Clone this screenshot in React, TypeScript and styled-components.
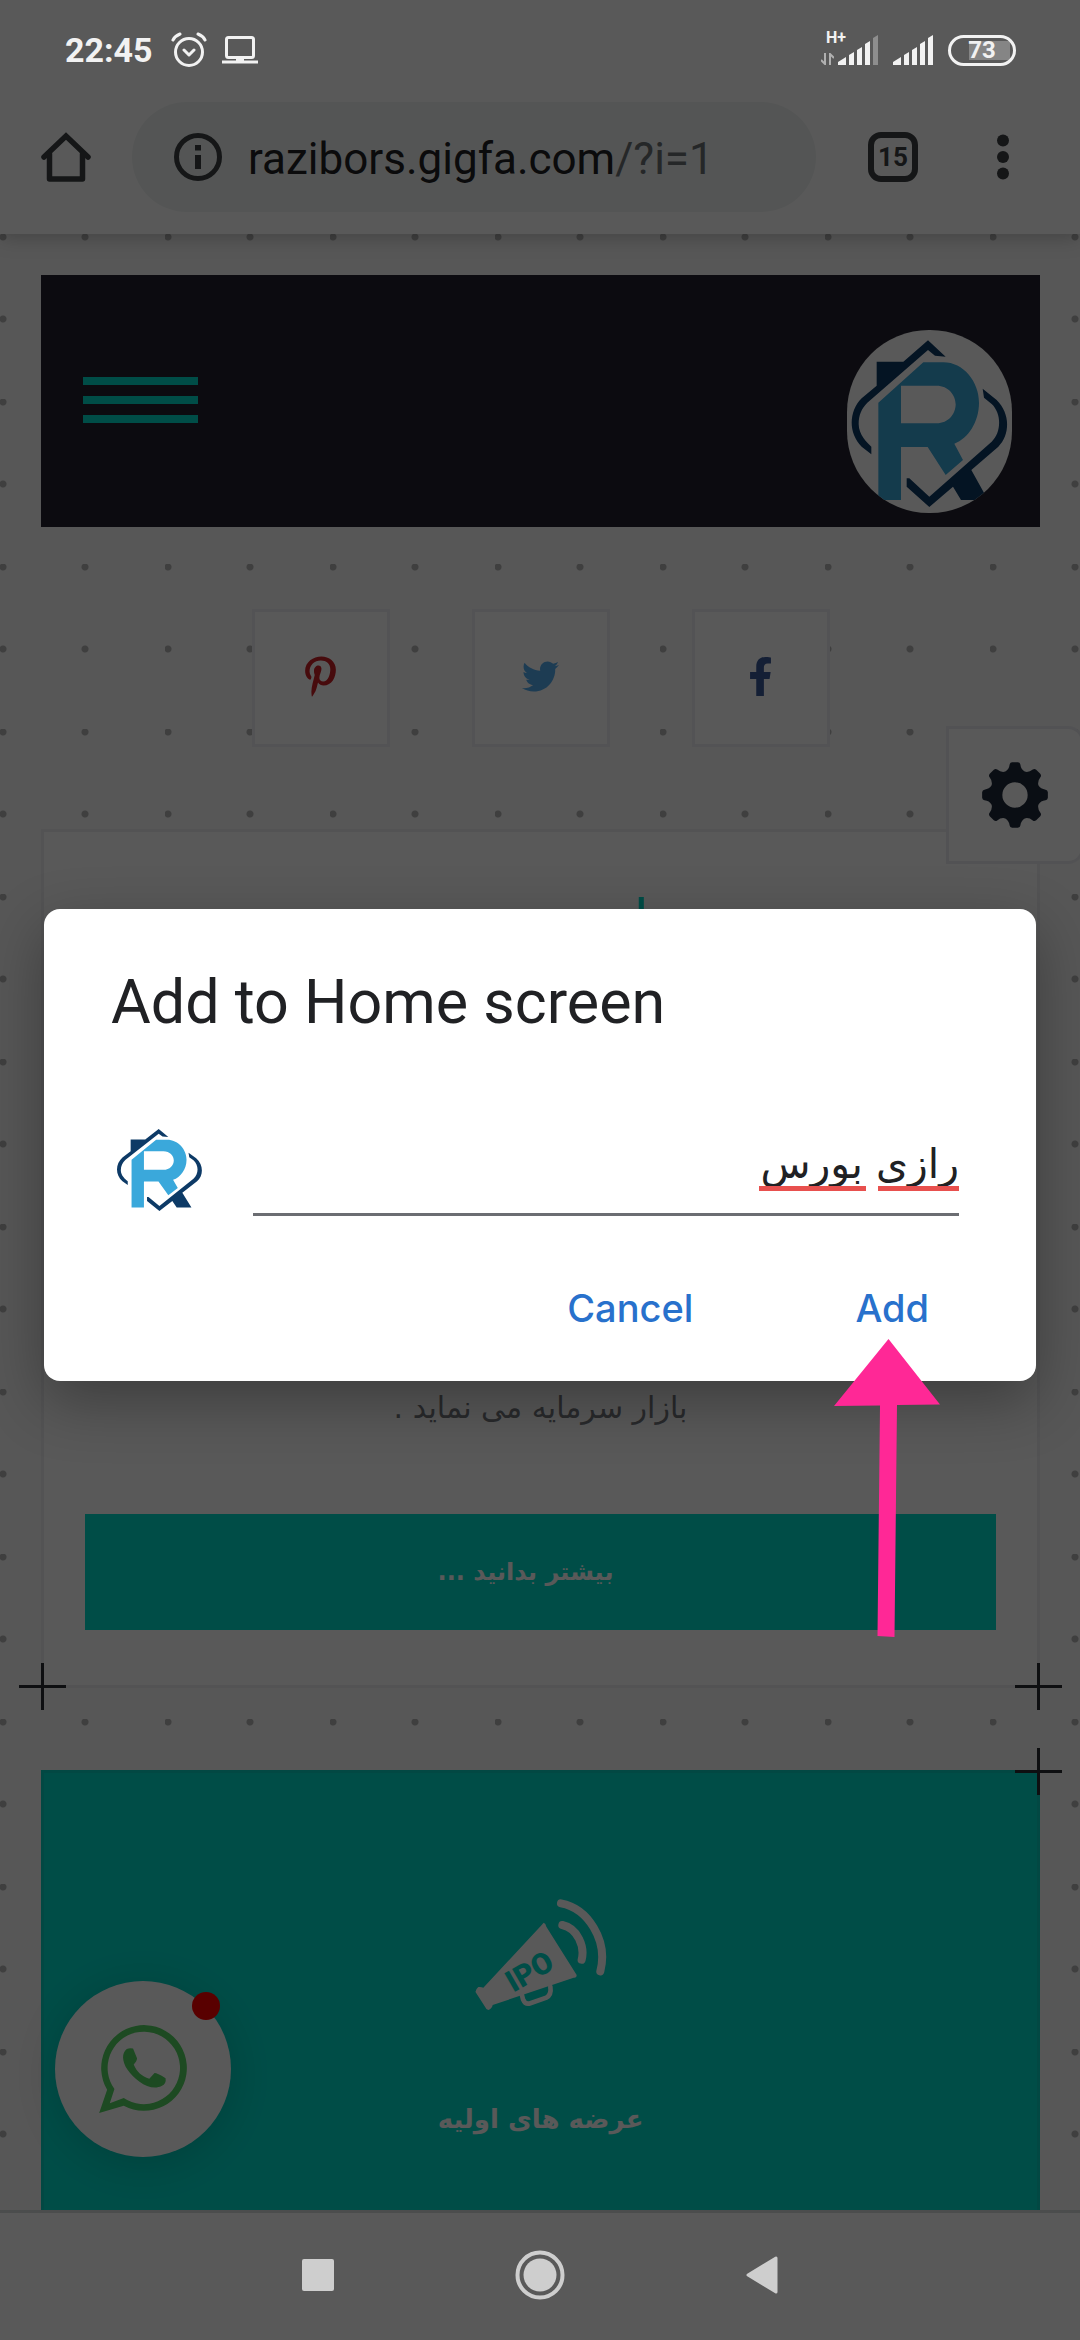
import React, { useState } from "react";
import styled, { createGlobalStyle } from "styled-components";
import { FaFacebookF, FaPinterestP, FaTwitter } from "react-icons/fa";

const teal = "#00dccb";
const ink = "#3c4043";
const persian = `"DejaVu Sans", sans-serif`;

const GlobalStyle = createGlobalStyle`
  *, *::before, *::after { box-sizing: border-box; }
  body { margin: 0; background: #595959; font-family: Roboto, sans-serif; }
  button { border: 0; padding: 0; background: none; font: inherit; color: inherit; cursor: pointer; }
  svg { display: block; }
`;

const Screen = styled.div`
  position: relative;
  display: flex;
  flex-direction: column;
  min-height: 100vh;
  overflow: hidden;
`;

/* ---------- system bars ---------- */

const StatusBar = styled.header`
  position: relative;
  z-index: 3;
  display: flex;
  align-items: center;
  justify-content: space-between;
  height: 100px;
  padding: 0 64px 0 65px;
  background: #595959;
  color: #f2f2f2;
`;

const StatusGroup = styled.div`
  display: flex;
  align-items: center;
  gap: 15px;
`;

const Clock = styled.time`
  padding-right: 3px;
  font-size: 34px;
  line-height: 40px;
  font-weight: 700;
`;

const Signal = styled.div`
  position: relative;
`;

const NetworkType = styled.span`
  position: absolute;
  right: 32px;
  top: -5px;
  font-size: 16px;
  line-height: 16px;
  font-weight: 700;
`;

const DataArrows = styled.svg`
  position: absolute;
  right: 44px;
  bottom: 0;
`;

const Battery = styled.div`
  display: flex;
  align-items: center;
  justify-content: center;
  width: 68px;
  height: 31px;
  border: 3px solid #f2f2f2;
  border-radius: 16px;
  padding: 3px;
  font-size: 24px;
  line-height: 24px;
  font-weight: 700;
  background: linear-gradient(#858585, #858585) right 3px center / 41px 19px no-repeat;
`;

const NavBar = styled.nav`
  position: relative;
  z-index: 3;
  display: flex;
  align-items: center;
  justify-content: center;
  gap: 172px;
  height: 130px;
  padding-bottom: 4px;
  border-top: 3px solid #4b4d4d;
  background: #595959;
  color: #cecece;
`;

const NavButton = styled.button`
  display: grid;
  place-items: center;
  width: 50px;
  height: 50px;
`;

/* ---------- browser ---------- */

const Toolbar = styled.div`
  position: relative;
  z-index: 1;
  display: flex;
  align-items: center;
  gap: 41px;
  padding: 2px 52px 22px 41px;
  background: #fff;
  color: ${ink};
  box-shadow: 0 2px 20px rgba(0, 0, 0, 0.25);
`;

const ToolButton = styled.button`
  display: grid;
  place-items: center;
  width: 50px;
  height: 50px;
`;

const ToolActions = styled.div`
  display: flex;
  gap: 60px;
  padding-left: 11px;
`;

const TabCount = styled(ToolButton)`
  border: 6px solid ${ink};
  border-radius: 13px;
  font-size: 26px;
  line-height: 32px;
  font-weight: 700;
`;

const AddressBar = styled.button`
  flex: 1;
  display: flex;
  align-items: center;
  gap: 26px;
  height: 110px;
  padding-left: 42px;
  border-radius: 55px;
  background: #f0f4f3;
  text-align: left;
`;

const Address = styled.span`
  padding-top: 4px;
  font-size: 44px;
  line-height: 56px;
  color: #202124;
`;

const AddressPath = styled.span`
  color: #6b6f73;
`;

/* ---------- site ---------- */

const dot = (x: number, y: number) =>
  `radial-gradient(circle at ${x}px ${y}px, #b4b4b4 3px, transparent 4px)`;

const Site = styled.main`
  position: relative;
  flex: 1;
  display: flex;
  flex-direction: column;
  gap: 82px;
  padding: 41px 40px 0 41px;
  background-color: #f8f8f8;
  background-image: ${dot(3, 3)}, ${dot(85, 3)}, ${dot(3, 85)}, ${dot(85, 85)};
  background-size: 165px 165px;
  font-family: ${persian};
`;

const SiteHeader = styled.div`
  display: flex;
  align-items: center;
  justify-content: space-between;
  height: 252px;
  padding: 40px 28px 0 42px;
  background: #23222e;
`;

const MenuButton = styled.button`
  display: flex;
  flex-direction: column;
  gap: 11px;
  width: 115px;
  margin-bottom: 42px;
`;

const MenuLine = styled.span`
  height: 8px;
  background: ${teal};
`;

const LogoDisc = styled.a`
  width: 165px;
  height: 183px;
  overflow: hidden;
  border-radius: 82px;
  background: #fff;
`;

const SocialRow = styled.div`
  display: flex;
  justify-content: center;
  gap: 82px;
`;

const SocialLink = styled.a<{ $color: string; $size: number }>`
  display: grid;
  place-items: center;
  width: 138px;
  height: 138px;
  padding-bottom: 4px;
  border: 3px solid #eeeef3;
  background: #fff;
  color: ${(p) => p.$color};
  font-size: ${(p) => p.$size}px;
`;

const SettingsButton = styled.button`
  position: absolute;
  top: 492px;
  right: -4px;
  z-index: 1;
  display: grid;
  place-items: center;
  width: 138px;
  height: 138px;
  border: 3px solid #ececef;
  border-radius: 0 16px 16px 0;
  background: #fff;
  color: #1e293b;
`;

const Card = styled.section`
  position: relative;
  display: flex;
  flex-direction: column;
  min-height: 859px;
  padding: 55px 41px;
  border: 3px solid #eeeeef;
  background: #fff;
  text-align: center;
`;

const CardTitle = styled.h1`
  margin: 0 0 auto;
  font-size: 56px;
  line-height: 68px;
  font-weight: 400;
  color: ${teal};
`;

const CardText = styled.p`
  margin: 0 0 82px;
  font-size: 30px;
  line-height: 48px;
  color: #75787e;
`;

const MoreButton = styled.button`
  height: 116px;
  padding-right: 30px;
  background: ${teal};
  font-size: 24px;
  line-height: 40px;
  font-weight: 700;
  color: #fff;
`;

const Plus = styled.span<{ $side: "left" | "right"; $edge: "top" | "bottom" }>`
  position: absolute;
  ${(p) => p.$side}: -25px;
  ${(p) => p.$edge}: -25px;
  width: 47px;
  height: 47px;
  background:
    linear-gradient(#2a2b33, #2a2b33) center / 3px 47px no-repeat,
    linear-gradient(#2a2b33, #2a2b33) center / 47px 3px no-repeat;
`;

const Offer = styled.section`
  position: relative;
  flex: 1;
  display: flex;
  flex-direction: column;
  align-items: center;
  gap: 81px;
  padding-top: 126px;
  border: 3px solid #08cfc0;
  border-bottom: 0;
  background: ${teal};
  color: #fff;
`;

const OfferTitle = styled.h2`
  margin: 0;
  font-size: 26px;
  line-height: 56px;
  font-weight: 700;
`;

const ChatButton = styled.button`
  position: absolute;
  left: 55px;
  bottom: 53px;
  width: 176px;
  height: 176px;
  display: grid;
  place-items: center;
  border-radius: 50%;
  background: #fff;
  box-shadow: 0 6px 40px rgba(0, 0, 0, 0.16);
`;

const ChatBadge = styled.span`
  position: absolute;
  top: 11px;
  right: 11px;
  width: 28px;
  height: 28px;
  border-radius: 50%;
  background: #f00;
`;

/* ---------- dialog ---------- */

const Scrim = styled.div`
  position: absolute;
  inset: 0;
  z-index: 2;
  display: flex;
  align-items: center;
  padding: 0 44px 50px;
  background: rgba(0, 0, 0, 0.65);
`;

const Dialog = styled.form`
  position: relative;
  flex: 1;
  padding: 57px 77px 35px 67px;
  border-radius: 16px;
  background: #fff;
  box-shadow: 0 20px 60px rgba(0, 0, 0, 0.32);
`;

const DialogTitle = styled.h2`
  margin: 0;
  font-size: 61px;
  line-height: 72px;
  font-weight: 400;
  color: #202124;
`;

const NameRow = styled.div`
  display: flex;
  align-items: center;
  gap: 51px;
  margin: 86px 0 54px;
  padding-left: 6px;
`;

const NameField = styled.label`
  position: relative;
  flex: 1;
  display: block;
`;

const NameInput = styled.input`
  display: block;
  width: 100%;
  height: 92px;
  padding: 0 0 10px;
  border: 0;
  border-bottom: 3px solid #6b6d72;
  border-radius: 0;
  outline: 0;
  background: transparent;
  font-family: ${persian};
  font-size: 41px;
  color: #202124;
`;

const SpellMarks = styled.span`
  position: absolute;
  right: 0;
  bottom: 25px;
  display: flex;
  flex-direction: row-reverse;
  gap: 12px;
`;

const SpellMark = styled.span<{ $width: number }>`
  width: ${(p) => p.$width}px;
  height: 5px;
  background: #e8504e;
`;

const DialogActions = styled.div`
  display: flex;
  justify-content: flex-end;
  gap: 162px;
  padding: 0 30px;
`;

const DialogButton = styled.button`
  font-family: Inter, sans-serif;
  font-size: 38px;
  line-height: 76px;
  font-weight: 500;
  color: #2871cc;
`;

const Pointer = styled.svg`
  position: absolute;
  right: 96px;
  top: 430px;
`;

/* Eight flared teeth around a disc; angles in degrees, radii in viewBox units. */
const polar = (radius: number, angle: number) => {
  const a = (angle * Math.PI) / 180;
  return `${(radius * Math.sin(a)).toFixed(1)} ${(-radius * Math.cos(a)).toFixed(1)}`;
};

const gearOutline = Array.from({ length: 8 }, (_, i) => {
  const a = i * 45;
  return `${i ? "L" : "M"}${polar(93, a - 10)}Q${polar(99, a - 9)} ${polar(99, a - 5)}L${polar(99, a + 5)}Q${polar(99, a + 9)} ${polar(93, a + 10)}Q${polar(79, a + 13)} ${polar(76, a + 22.5)}Q${polar(79, a + 32)} ${polar(93, a + 35)}`;
}).join("");

const Gear = () => (
  <svg width="66" height="66" viewBox="-99 -99 198 198" fill="currentColor">
    <path fillRule="evenodd" d={`${gearOutline}ZM-38 0A38 38 0 1 0 38 0A38 38 0 1 0 -38 0Z`} />
  </svg>
);

const BrandMark = ({ viewBox, width, height }: { viewBox: string; width: number; height: number }) => (
  <svg viewBox={viewBox} width={width} height={height} preserveAspectRatio="none" role="img" aria-label="Razi Bors">
    <g fill="#0d3a66">
      <path d="M290 275H370L444 211L497 260L465 257L444 240L262 398C245 415 236 435 236 462C236 495 262 518 274 530V553L245 530C205 490 205 425 245 385L290 347Z" />
      <path d="M608 356L650 390C692 432 690 495 655 530L574 600L624 690H543L519 650L448 711L380 650V625H388L448 680L635 515C665 487 665 430 635 402L612 383Z" />
    </g>
    <path
      fill="#3aa8db"
      fillRule="evenodd"
      d="M295 398L430 277H490C550 277 597 335 597 398C597 455 565 505 523 521L549 570L497 615L443 531H363V690H295ZM363 347V460H470C505 460 527 432 527 403C527 375 505 347 470 347Z"
    />
  </svg>
);

const SignalBars = ({ weak }: { weak?: boolean }) => (
  <svg width="40" height="30" viewBox="0 0 40 30" fill="currentColor">
    <path d="M0 30V27L8 22V30ZM11 30V20L16 17V30ZM19 30V15L24 12V30ZM27 30V9L32 6V30Z" />
    <path d="M35 30V3L40 0V30Z" opacity={weak ? 0.35 : 1} />
  </svg>
);

export default function App() {
  const [name, setName] = useState("رازی بورس");

  return (
    <Screen>
      <GlobalStyle />
      <StatusBar>
        <StatusGroup>
          <Clock>22:45</Clock>
          <svg width="36" height="36" viewBox="0 0 36 36" fill="none" stroke="currentColor" strokeWidth="3" strokeLinecap="round">
            <circle cx="18" cy="20" r="13.5" />
            <path d="M13 18l5 5 5-5M2 8q2-4 7-6M34 8q-2-4-7-6" strokeLinejoin="round" />
          </svg>
          <svg width="36" height="28" viewBox="0 0 36 28" fill="none" stroke="currentColor" strokeWidth="3">
            <rect x="4.500" y="1.500" width="27" height="20" rx="2" />
            <path d="M0 26H36M14 24.500H22" />
          </svg>
        </StatusGroup>
        <StatusGroup>
          <Signal>
            <NetworkType>H+</NetworkType>
            <DataArrows width="13" height="12" viewBox="0 0 13 12" fill="none" stroke="#b0b0b0" strokeWidth="2">
              <path d="M4 0V11L0 7M9 12V1L13 5" />
            </DataArrows>
            <SignalBars weak />
          </Signal>
          <SignalBars />
          <Battery>73</Battery>
        </StatusGroup>
      </StatusBar>

      <Toolbar>
        <ToolButton aria-label="Home">
          <svg width="50" height="50" viewBox="0 0 50 50" fill="none" stroke="currentColor" strokeWidth="5.500" strokeLinejoin="round" strokeLinecap="round">
            <path d="M3 25L25 4L47 25" strokeLinejoin="miter" />
            <path d="M8.500 22V47H41.500V22" />
          </svg>
        </ToolButton>
        <AddressBar aria-label="Address">
          <svg width="48" height="48" viewBox="0 0 48 48" fill="none" stroke="currentColor" strokeWidth="5">
            <circle cx="24" cy="24" r="21.500" />
            <path d="M24 12V17.500M24 22V36" strokeWidth="6" />
          </svg>
          <Address>
            razibors.gigfa.com<AddressPath>/?i=1</AddressPath>
          </Address>
        </AddressBar>
        <ToolActions>
          <TabCount aria-label="15 open tabs">15</TabCount>
          <ToolButton aria-label="More">
            <svg width="12" height="46" viewBox="0 0 12 46" fill="currentColor">
              <circle cx="6" cy="6.500" r="6" />
              <circle cx="6" cy="23" r="6" />
              <circle cx="6" cy="39.500" r="6" />
            </svg>
          </ToolButton>
        </ToolActions>
      </Toolbar>

      <Site>
        <SiteHeader>
          <MenuButton aria-label="Menu">
            <MenuLine />
            <MenuLine />
            <MenuLine />
          </MenuButton>
          <LogoDisc href="#">
            <BrandMark viewBox="201 180 495 549" width={165} height={183} />
          </LogoDisc>
        </SiteHeader>

        <SocialRow>
          <SocialLink href="#" aria-label="Pinterest" $color="#cb2027" $size={41}><FaPinterestP /></SocialLink>
          <SocialLink href="#" aria-label="Twitter" $color="#55acee" $size={37}><FaTwitter /></SocialLink>
          <SocialLink href="#" aria-label="Facebook" $color="#3b5998" $size={39}><FaFacebookF /></SocialLink>
        </SocialRow>

        <SettingsButton aria-label="Settings"><Gear /></SettingsButton>

        <Card dir="rtl" lang="fa">
          <CardTitle>رازی بورس</CardTitle>
          <CardText>بازار سرمایه می نماید .</CardText>
          <MoreButton>بیشتر بدانید ...</MoreButton>
          <Plus $side="left" $edge="bottom" />
          <Plus $side="right" $edge="bottom" />
        </Card>

        <Offer dir="rtl" lang="fa">
          <svg width="132" height="111" viewBox="222 117 396 333" direction="ltr">
            <path fill="currentColor" d="M428 188Q434 190 436 200L527 345Q527 354 518 353L275 435Q273 446 262 450Q255 448 252 440L224 397Q222 390 232 381Q240 380 247 383L420 197Z" />
            <g fill="none" stroke="currentColor" strokeLinecap="round">
              <path strokeWidth="14" d="M362 402L366 418Q373 435 388 430L436 413Q452 405 448 380" />
              <path strokeWidth="24" d="M480 130C560 145 622 240 598 334M484 195C530 205 552 260 542 299" />
            </g>
            <text transform="translate(337 398) rotate(-30)" fill={teal} fontFamily="Roboto, sans-serif" fontWeight="900" fontSize="90">IPO</text>
          </svg>
          <OfferTitle>عرضه های اولیه</OfferTitle>
          <Plus $side="right" $edge="top" />
        </Offer>

        <ChatButton aria-label="WhatsApp">
          <svg width="88" height="88" viewBox="297 254 264 265" fill="#54d362">
            <path fillRule="evenodd" d="M321 449A129 129 0 1 1 371 497L297 519ZM343 447A109 109 0 1 1 371 474L329 490Z" />
            <path d="M380 326Q390 322 399 325L411 354Q411 362 401 373C410 395 425 408 448 416L463 399Q468 397 497 414Q500 430 485 438C450 455 404 420 382 388C365 362 365 338 380 326Z" />
          </svg>
          <ChatBadge />
        </ChatButton>
      </Site>

      <NavBar aria-label="System navigation">
        <NavButton aria-label="Recent apps">
          <svg width="32" height="32" viewBox="0 0 32 32" fill="currentColor"><rect width="32" height="32" rx="2" /></svg>
        </NavButton>
        <NavButton aria-label="Home screen">
          <svg width="50" height="50" viewBox="0 0 50 50" fill="currentColor">
            <circle cx="25" cy="25" r="22.500" fill="none" stroke="currentColor" strokeWidth="4" />
            <circle cx="25" cy="25" r="16.500" />
          </svg>
        </NavButton>
        <NavButton aria-label="Back">
          <svg width="32" height="38" viewBox="0 0 32 38" fill="currentColor" stroke="currentColor" strokeWidth="3" strokeLinejoin="round">
            <path d="M30 2V36L2 19Z" />
          </svg>
        </NavButton>
      </NavBar>

      <Scrim>
        <Dialog role="dialog" aria-labelledby="dialog-title" onSubmit={(e: React.FormEvent) => e.preventDefault()}>
          <DialogTitle id="dialog-title">Add to Home screen</DialogTitle>
          <NameRow>
            <BrandMark viewBox="215 211 467 500" width={85} height={82} />
            <NameField>
              <NameInput
                dir="rtl"
                lang="fa"
                aria-label="Name"
                value={name}
                onChange={(e: React.ChangeEvent<HTMLInputElement>) => setName(e.target.value)}
              />
              <SpellMarks>
                <SpellMark $width={81} />
                <SpellMark $width={107} />
              </SpellMarks>
            </NameField>
          </NameRow>
          <DialogActions>
            <DialogButton type="button">Cancel</DialogButton>
            <DialogButton type="submit">Add</DialogButton>
          </DialogActions>
          <Pointer width="106" height="298" viewBox="834 1339 106 298" fill="#ff2896" aria-hidden="true">
            <path d="M888.500 1339L940 1404.500L897 1405L894.500 1637L877.500 1636L880 1405.500L834 1406Z" />
          </Pointer>
        </Dialog>
      </Scrim>
    </Screen>
  );
}
